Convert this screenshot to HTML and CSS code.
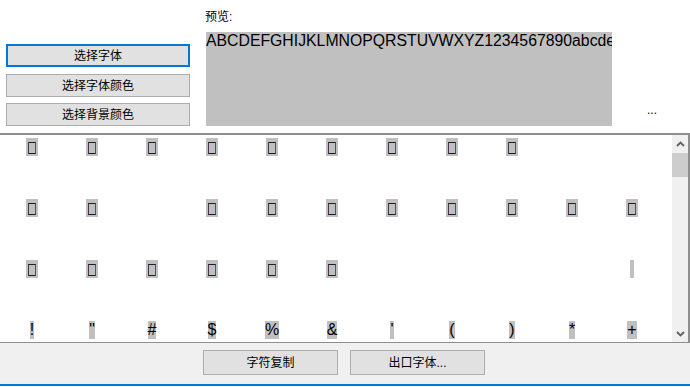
FILE: index.html
```html
<!DOCTYPE html>
<html lang="zh-CN">
<head>
<meta charset="utf-8">
<title>字体预览</title>
<link rel="stylesheet" href="styles.css">
</head>
<body>
<div class="app">
  <div class="top">
    <div class="btns">
      <button class="btn btn-focus">选择字体</button>
      <button class="btn btn-2">选择字体颜色</button>
      <button class="btn btn-3">选择背景颜色</button>
    </div>
    <div class="preview-col">
      <div class="preview-label">预览:</div>
      <div class="preview-box">ABCDEFGHIJKLMNOPQRSTUVWXYZ1234567890abcde</div>
    </div>
    <div class="more">...</div>
  </div>

  <div class="panel">
    <div class="grid">
      <!-- row 1 -->
      <div class="cell"><span class="tofu"><span class="tofu-in"></span></span></div>
      <div class="cell"><span class="tofu"><span class="tofu-in"></span></span></div>
      <div class="cell"><span class="tofu"><span class="tofu-in"></span></span></div>
      <div class="cell"><span class="tofu"><span class="tofu-in"></span></span></div>
      <div class="cell"><span class="tofu"><span class="tofu-in"></span></span></div>
      <div class="cell"><span class="tofu"><span class="tofu-in"></span></span></div>
      <div class="cell"><span class="tofu"><span class="tofu-in"></span></span></div>
      <div class="cell"><span class="tofu"><span class="tofu-in"></span></span></div>
      <div class="cell"><span class="tofu"><span class="tofu-in"></span></span></div>
      <div class="cell"></div>
      <div class="cell"></div>
      <!-- row 2 -->
      <div class="cell"><span class="tofu"><span class="tofu-in"></span></span></div>
      <div class="cell"><span class="tofu"><span class="tofu-in"></span></span></div>
      <div class="cell"></div>
      <div class="cell"><span class="tofu"><span class="tofu-in"></span></span></div>
      <div class="cell"><span class="tofu"><span class="tofu-in"></span></span></div>
      <div class="cell"><span class="tofu"><span class="tofu-in"></span></span></div>
      <div class="cell"><span class="tofu"><span class="tofu-in"></span></span></div>
      <div class="cell"><span class="tofu"><span class="tofu-in"></span></span></div>
      <div class="cell"><span class="tofu"><span class="tofu-in"></span></span></div>
      <div class="cell"><span class="tofu"><span class="tofu-in"></span></span></div>
      <div class="cell"><span class="tofu"><span class="tofu-in"></span></span></div>
      <!-- row 3 -->
      <div class="cell"><span class="tofu"><span class="tofu-in"></span></span></div>
      <div class="cell"><span class="tofu"><span class="tofu-in"></span></span></div>
      <div class="cell"><span class="tofu"><span class="tofu-in"></span></span></div>
      <div class="cell"><span class="tofu"><span class="tofu-in"></span></span></div>
      <div class="cell"><span class="tofu"><span class="tofu-in"></span></span></div>
      <div class="cell"><span class="tofu"><span class="tofu-in"></span></span></div>
      <div class="cell"></div>
      <div class="cell"></div>
      <div class="cell"></div>
      <div class="cell"></div>
      <div class="cell"><span class="bar"></span></div>
      <!-- row 4 -->
      <div class="cell"><span class="ch">!</span></div>
      <div class="cell"><span class="ch">"</span></div>
      <div class="cell"><span class="ch">#</span></div>
      <div class="cell"><span class="ch">$</span></div>
      <div class="cell"><span class="ch">%</span></div>
      <div class="cell"><span class="ch">&amp;</span></div>
      <div class="cell"><span class="ch">'</span></div>
      <div class="cell"><span class="ch">(</span></div>
      <div class="cell"><span class="ch">)</span></div>
      <div class="cell"><span class="ch">*</span></div>
      <div class="cell"><span class="ch">+</span></div>
    </div>
    <div class="scrollbar">
      <div class="sb-btn">
        <svg width="9" height="6" viewBox="0 0 9 6"><polyline points="1,5 4.5,1.5 8,5" fill="none" stroke="#606060" stroke-width="1.8"/></svg>
      </div>
      <div class="sb-thumb"></div>
      <div class="sb-track"></div>
      <div class="sb-btn">
        <svg width="9" height="6" viewBox="0 0 9 6"><polyline points="1,1 4.5,4.5 8,1" fill="none" stroke="#606060" stroke-width="1.8"/></svg>
      </div>
    </div>
  </div>

  <div class="bottom">
    <button class="btn btn-wide">字符复制</button>
    <button class="btn btn-wide">出口字体...</button>
  </div>
  <div class="frame-line"></div>
</div>
</body>
</html>
```

FILE: styles.css
```css
html, body {
  margin: 0;
  padding: 0;
  background: #ffffff;
}

body {
  width: 690px;
  height: 387px;
  overflow: hidden;
  font-family: "Liberation Sans", "Noto Sans CJK SC", sans-serif;
  font-size: 12px;
  color: #000;
}

.app {
  width: 690px;
  height: 387px;
  display: flex;
  flex-direction: column;
}

/* ---------- top area ---------- */
.top {
  height: 133px;
  display: flex;
  flex-shrink: 0;
}

.btns {
  margin-left: 6px;
  width: 184px;
  padding-top: 44px;
  display: flex;
  flex-direction: column;
}

.btn {
  box-sizing: border-box;
  margin: 0;
  padding: 0;
  background: #e1e1e1;
  border: 1px solid #adadad;
  font-family: "Liberation Sans", "Noto Sans CJK SC", sans-serif;
  font-size: 12px;
  color: #000;
  line-height: 14px;
  text-align: center;
  display: flex;
  align-items: center;
  justify-content: center;
}

.btns .btn {
  height: 23px;
  width: 184px;
}

.btn-focus {
  border: 2px solid #0078d7;
}

.btn-2 {
  margin-top: 7px;
}

.btn-3 {
  margin-top: 6px;
}

.preview-col {
  margin-left: 16px;
  width: 406px;
  display: flex;
  flex-direction: column;
}

.preview-label {
  padding-top: 9px;
  height: 16px;
  line-height: 16px;
  margin-bottom: 7px;
  margin-left: -1px;
}

.preview-box {
  width: 406px;
  height: 94px;
  background: #c0c0c0;
  overflow: hidden;
  white-space: nowrap;
  font-family: "Liberation Sans", Arial, sans-serif;
  font-size: 15.8px;
  line-height: 18px;
  color: #000;
}

.more {
  margin-left: 35px;
  padding-top: 103px;
  line-height: 14px;
  font-size: 12px;
}

/* ---------- character panel ---------- */
.panel {
  box-sizing: border-box;
  height: 210px;
  flex-shrink: 0;
  display: flex;
  border-top: 2px solid #8e8e8e;
  border-right: 2px solid #8e8e8e;
  border-bottom: 1px solid #8e8e8e;
  background: #ffffff;
}

.grid {
  width: 672px;
  height: 207px;
  overflow: hidden;
  box-sizing: border-box;
  padding-left: 2px;
  display: grid;
  grid-template-columns: repeat(11, 60px);
  grid-auto-rows: 61px;
}

.cell {
  display: flex;
  justify-content: center;
  align-items: flex-start;
  padding-top: 3px;
}

.tofu {
  box-sizing: border-box;
  width: 12px;
  height: 18px;
  padding: 4px 2px 2px 2px;
  background: #c0c0c0;
  display: flex;
}

.tofu-in {
  box-sizing: border-box;
  width: 8px;
  height: 12px;
  border: 1px solid #1e1e1e;
  border-left-color: #4a3350;
  border-right-color: #2f6268;
}

.bar {
  width: 4px;
  height: 18px;
  background: #c0c0c0;
}

.ch {
  background: #c0c0c0;
  font-family: "Liberation Sans", Arial, sans-serif;
  font-size: 16px;
  line-height: 18px;
  height: 18px;
  color: #000;
}

/* ---------- scrollbar ---------- */
.scrollbar {
  width: 16px;
  height: 207px;
  background: #f0f0f0;
  display: flex;
  flex-direction: column;
}

.sb-btn {
  height: 17px;
  display: flex;
  align-items: center;
  justify-content: center;
  padding-left: 1px;
}

.sb-thumb {
  margin-top: 1px;
  height: 24px;
  background: #cdcdcd;
}

.sb-track {
  flex: 1;
}

/* ---------- bottom ---------- */
.bottom {
  height: 41px;
  box-sizing: border-box;
  background: #f0f0f0;
  padding-top: 7px;
  padding-left: 203px;
  display: flex;
  gap: 12px;
  flex-shrink: 0;
}

.btn-wide {
  width: 135px;
  height: 25px;
}

.frame-line {
  height: 2px;
  background: #0078d7;
  flex-shrink: 0;
}
```
